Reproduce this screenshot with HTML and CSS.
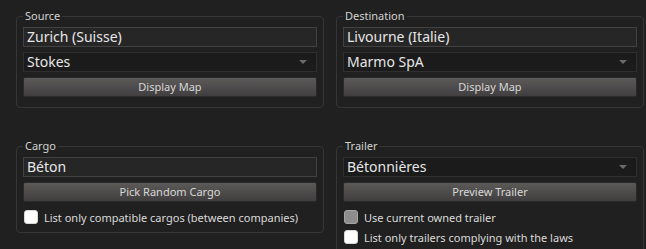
FILE: index.html
```html
<!DOCTYPE html>
<html>
<head>
<meta charset="utf-8">
<link rel="stylesheet" href="styles.css">
</head>
<body>
<div class="grid">
  <fieldset class="group">
    <legend>Source</legend>
    <div class="field">Zurich (Suisse)</div>
    <div class="combo"><span>Stokes</span><i class="arrow"></i></div>
    <div class="btn">Display Map</div>
  </fieldset>
  <fieldset class="group">
    <legend>Destination</legend>
    <div class="field">Livourne (Italie)</div>
    <div class="combo"><span>Marmo SpA</span><i class="arrow"></i></div>
    <div class="btn">Display Map</div>
  </fieldset>
  <fieldset class="group group-checks">
    <legend>Cargo</legend>
    <div class="field">Béton</div>
    <div class="btn">Pick Random Cargo</div>
    <label class="check"><span class="box"></span>List only compatible cargos (between companies)</label>
  </fieldset>
  <fieldset class="group">
    <legend>Trailer</legend>
    <div class="combo"><span>Bétonnières</span><i class="arrow"></i></div>
    <div class="btn">Preview Trailer</div>
    <label class="check"><span class="box disabled"></span>Use current owned trailer</label>
    <label class="check"><span class="box"></span>List only trailers complying with the laws</label>
  </fieldset>
</div>
</body>
</html>
```

FILE: styles.css
```css
html, body {
  margin: 0;
  background: #202020;
  overflow: hidden;
}
body {
  padding: 10px 0 0 16px;
  font-family: "Noto Sans", "Open Sans", sans-serif;
  color: #dcdcdc;
}
.grid {
  display: grid;
  grid-template-columns: 308px 308px;
  column-gap: 12px;
  row-gap: 32px;
  align-items: start;
}
.group {
  margin: 0;
  min-width: 0;
  border: 1px solid #363636;
  border-radius: 4px;
  padding: 5px 6px 10px 6px;
  display: flex;
  flex-direction: column;
  gap: 5px;
}
.group-checks {
  padding-bottom: 5px;
}
.group legend {
  font-size: 11px;
  line-height: 12px;
  padding: 0 2px;
  margin-left: 0;
  color: #d2d2d2;
}
.field, .combo {
  height: 20px;
  box-sizing: border-box;
  font-size: 14px;
  line-height: 18px;
  padding: 0 3px;
  color: #e6e6e6;
}
.field {
  background: #262626;
  border: 1px solid #414141;
}
.combo {
  background: #1b1b1b;
  border: 1px solid #2f2f2f;
  display: flex;
  align-items: center;
  justify-content: space-between;
}
.arrow {
  width: 0;
  height: 0;
  border-left: 4px solid transparent;
  border-right: 4px solid transparent;
  border-top: 4px solid #6a6a6a;
  margin-right: 6px;
}
.btn {
  height: 20px;
  box-sizing: border-box;
  border: 1px solid #2b2a2a;
  border-radius: 2px;
  background: linear-gradient(#5c5959, #403e3e);
  font-size: 11px;
  line-height: 18px;
  text-align: center;
  color: #d8d8d8;
}
.check {
  display: flex;
  align-items: center;
  gap: 6px;
  height: 20px;
  font-size: 11px;
  color: #dadada;
  padding-left: 1px;
}
.check + .check {
  margin-top: -5px;
}
.box {
  width: 14px;
  height: 14px;
  box-sizing: border-box;
  border-radius: 3px;
  background: #ffffff;
  border: 1px solid #d8d8d8;
  flex: none;
}
.box.disabled {
  background: #8d8d8d;
  border-color: #a5a5a5;
}
```
